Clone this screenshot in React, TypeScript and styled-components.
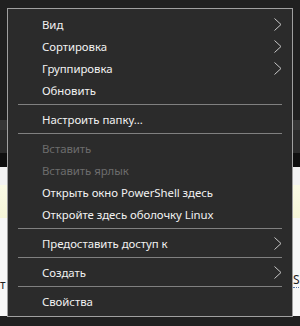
import React from "react";
import styled, { createGlobalStyle } from "styled-components";

const Global = createGlobalStyle`
  html, body { margin: 0; padding: 0; background: #202020; overflow: hidden; }
  #root { width: 300px; height: 326px; }
`;

const Desktop = styled.div`
  position: relative;
  width: 300px;
  height: 326px;
  display: flex;
  flex-direction: column;
  overflow: hidden;
  font-family: "Noto Sans", "Segoe UI", sans-serif;
`;

const Band = styled.div<{ $h: number; $bg: string }>`
  height: ${(p) => p.$h}px;
  flex: 0 0 auto;
  background: ${(p) => p.$bg};
  display: flex;
  justify-content: space-between;
  align-items: flex-end;
  overflow: hidden;
`;

const BackText = styled.span<{ $side: "left" | "right" }>`
  font-size: 12px;
  color: #1e1e1e;
  line-height: 14px;
  white-space: nowrap;
  ${(p) =>
    p.$side === "left"
      ? "margin-left: 0px; margin-bottom: 24px;"
      : "margin-right: -7px; margin-bottom: 28px; border-bottom: 1px dotted #5577aa;"}
`;

const Menu = styled.div`
  position: absolute;
  left: 7px;
  top: 8px;
  width: 286px;
  box-sizing: border-box;
  border: 1px solid #a0a0a0;
  background: #2b2b2b;
  padding: 4px 0;
  display: flex;
  flex-direction: column;
`;

const Item = styled.div<{ $disabled?: boolean }>`
  height: 22px;
  display: flex;
  align-items: center;
  padding-left: 34px;
  padding-right: 10px;
  font-size: 11.4px;
  letter-spacing: -0.05px;
  color: ${(p) => (p.$disabled ? "#6d6d6d" : "#f2f2f2")};
  white-space: nowrap;
`;

const Label = styled.span`
  flex: 1;
`;

const Separator = styled.div`
  height: 1px;
  margin: 3px 10px;
  background: #808080;
`;

const Chevron = () => (
  <svg width="8" height="13" viewBox="0 0 8 13" style={{ display: "block" }}>
    <path d="M0.5 0.5 L7 6.5 L0.5 12.5" fill="none" stroke="#c8c8c8" strokeWidth="1" />
  </svg>
);

type Entry =
  | { kind: "item"; label: string; sub?: boolean; disabled?: boolean }
  | { kind: "sep" };

const entries: Entry[] = [
  { kind: "item", label: "Вид", sub: true },
  { kind: "item", label: "Сортировка", sub: true },
  { kind: "item", label: "Группировка", sub: true },
  { kind: "item", label: "Обновить" },
  { kind: "sep" },
  { kind: "item", label: "Настроить папку..." },
  { kind: "sep" },
  { kind: "item", label: "Вставить", disabled: true },
  { kind: "item", label: "Вставить ярлык", disabled: true },
  { kind: "item", label: "Открыть окно PowerShell здесь" },
  { kind: "item", label: "Откройте здесь оболочку Linux" },
  { kind: "sep" },
  { kind: "item", label: "Предоставить доступ к", sub: true },
  { kind: "sep" },
  { kind: "item", label: "Создать", sub: true },
  { kind: "sep" },
  { kind: "item", label: "Свойства" },
];

export default function App() {
  return (
    <>
      <Global />
      <Desktop>
        <Band $h={120} $bg="#202020" />
        <Band $h={10} $bg="#363636" />
        <Band $h={23} $bg="#2b2b2b" />
        <Band $h={14} $bg="#0f0f0f" />
        <Band $h={18} $bg="#f3f3f3" />
        <Band $h={33} $bg="linear-gradient(#fafae6, #f6f6d8)" />
        <Band $h={98} $bg="#f7f7f7">
          <BackText $side="left">т</BackText>
          <BackText $side="right">Sh</BackText>
        </Band>
        <Band $h={10} $bg="#202020" />
        <Menu>
          {entries.map((e, i) =>
            e.kind === "sep" ? (
              <Separator key={i} />
            ) : (
              <Item key={i} $disabled={e.disabled}>
                <Label>{e.label}</Label>
                {e.sub && <Chevron />}
              </Item>
            )
          )}
        </Menu>
      </Desktop>
    </>
  );
}
